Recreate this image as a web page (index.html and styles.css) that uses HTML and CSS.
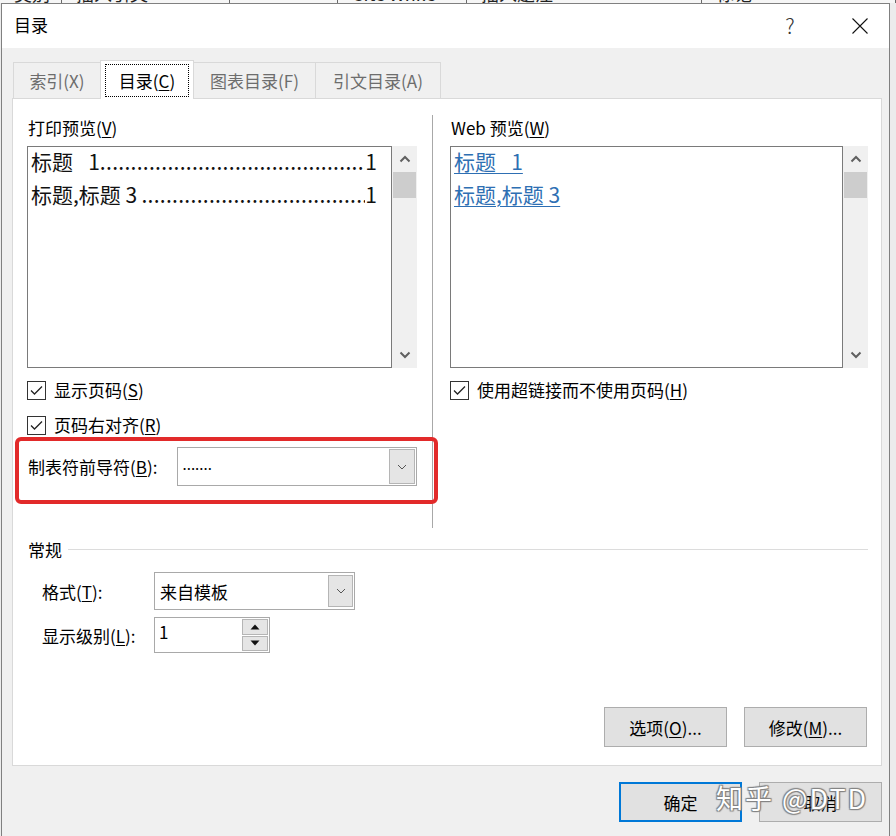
FILE: index.html
```html
<!DOCTYPE html>
<html lang="zh-CN">
<head>
<meta charset="utf-8">
<title>目录</title>
<link rel="stylesheet" href="styles.css">
</head>
<body>
<div class="sheet">
  <div class="cell w1"><span>类别</span></div>
  <div class="cell w2"><span>插入引文</span></div>
  <div class="cell w3"><span></span></div>
  <div class="cell w4"><span>Cite While</span></div>
  <div class="cell w5"><span>插入题注</span></div>
  <div class="cell w6"><span>标记</span></div>
</div>
<div class="dialog">
  <div class="titlebar">
    <span class="title">目录</span>
    <span class="help">?</span>
    <span class="close"><svg width="16" height="16" viewBox="0 0 16 16"><path d="M0.5 0.5L15.5 15.5M15.5 0.5L0.5 15.5" stroke="#111" stroke-width="1.1" fill="none"/></svg></span>
  </div>
  <div class="body">
    <div class="tabs">
      <div class="tab t1">索引(X)</div>
      <div class="tab sel t2"><span class="focus">目录(<u>C</u>)</span></div>
      <div class="tab t3">图表目录(F)</div>
      <div class="tab t4">引文目录(A)</div>
    </div>
    <div class="panel">
      <div class="top">
        <div class="col left">
          <div class="label">打印预览(<u>V</u>)</div>
          <div class="preview">
            <div class="list">
              <div class="entry"><span class="name">标题&ensp; 1</span><span class="leader">..............................................................................</span><span class="num">1</span></div>
              <div class="entry"><span class="name">标题,标题 3&thinsp;</span><span class="leader">..............................................................................</span><span class="num">1</span></div>
            </div>
            <div class="scroll">
              <div class="sb-btn"><svg width="12" height="8" viewBox="0 0 12 8"><polyline points="1.5,6.5 6,2 10.5,6.5" fill="none" stroke="#606060" stroke-width="2"/></svg></div>
              <div class="thumb"></div>
              <div class="sb-fill"></div>
              <div class="sb-btn"><svg width="12" height="8" viewBox="0 0 12 8"><polyline points="1.5,1.5 6,6 10.5,1.5" fill="none" stroke="#606060" stroke-width="2"/></svg></div>
            </div>
          </div>
          <div class="check c1">
            <span class="box"><svg width="17" height="17" viewBox="0 0 17 17"><polyline points="3,8.5 6.5,12 14,4.5" fill="none" stroke="#222" stroke-width="1.3"/></svg></span>
            <span>显示页码(<u>S</u>)</span>
          </div>
          <div class="check c2">
            <span class="box"><svg width="17" height="17" viewBox="0 0 17 17"><polyline points="3,8.5 6.5,12 14,4.5" fill="none" stroke="#222" stroke-width="1.3"/></svg></span>
            <span>页码右对齐(<u>R</u>)</span>
          </div>
          <div class="leader-row">
            <span class="leader-label">制表符前导符(<u>B</u>):</span>
            <div class="combo leader-combo">
              <span class="val dots">.......</span>
              <span class="drop"><svg width="10" height="6" viewBox="0 0 10 6"><polyline points="1,1 5,5 9,1" fill="none" stroke="#555" stroke-width="1"/></svg></span>
            </div>
          </div>
        </div>
        <div class="sep"></div>
        <div class="col right">
          <div class="label">Web 预览(<u>W</u>)</div>
          <div class="preview">
            <div class="list">
              <div class="entry link"><a>标题&ensp; 1</a></div>
              <div class="entry link"><a>标题,标题 3</a></div>
            </div>
            <div class="scroll">
              <div class="sb-btn"><svg width="12" height="8" viewBox="0 0 12 8"><polyline points="1.5,6.5 6,2 10.5,6.5" fill="none" stroke="#606060" stroke-width="2"/></svg></div>
              <div class="thumb"></div>
              <div class="sb-fill"></div>
              <div class="sb-btn"><svg width="12" height="8" viewBox="0 0 12 8"><polyline points="1.5,1.5 6,6 10.5,1.5" fill="none" stroke="#606060" stroke-width="2"/></svg></div>
            </div>
          </div>
          <div class="check c1">
            <span class="box"><svg width="17" height="17" viewBox="0 0 17 17"><polyline points="3,8.5 6.5,12 14,4.5" fill="none" stroke="#222" stroke-width="1.3"/></svg></span>
            <span>使用超链接而不使用页码(<u>H</u>)</span>
          </div>
        </div>
      </div>
      <div class="group-head"><span>常规</span><span class="rule"></span></div>
      <div class="form">
        <div class="form-row r1">
          <span class="flabel">格式(<u>T</u>):</span>
          <div class="combo fmt-combo">
            <span class="val">来自模板</span>
            <span class="drop"><svg width="10" height="6" viewBox="0 0 10 6"><polyline points="1,1 5,5 9,1" fill="none" stroke="#555" stroke-width="1"/></svg></span>
          </div>
        </div>
        <div class="form-row r2">
          <span class="flabel">显示级别(<u>L</u>):</span>
          <div class="spin">
            <span class="val">1</span>
            <span class="spin-btns">
              <span class="sbtn"><svg width="10" height="6" viewBox="0 0 10 6"><polygon points="0.5,5.5 5,0.5 9.5,5.5" fill="#111"/></svg></span>
              <span class="sbtn"><svg width="10" height="6" viewBox="0 0 10 6"><polygon points="0.5,0.5 9.5,0.5 5,5.5" fill="#111"/></svg></span>
            </span>
          </div>
        </div>
      </div>
      <div class="actions">
        <div class="btn">选项(<u>O</u>)...</div>
        <div class="btn">修改(<u>M</u>)...</div>
      </div>
    </div>
    <div class="footer">
      <div class="btn default">确定</div>
      <div class="btn">取消</div>
    </div>
  </div>
  <div class="annot"></div>
  <div class="watermark">知乎 @DTD</div>
</div>
</body>
</html>
```

FILE: styles.css
```css
* { box-sizing: border-box; }
html, body { margin: 0; padding: 0; }
body {
  width: 896px;
  height: 836px;
  overflow: hidden;
  background: #ececec;
  font-family: "Noto Sans CJK SC", "Noto Sans", sans-serif;
  font-size: 17px;
  color: #000;
}
u { text-decoration: underline; text-underline-offset: 2px; }

/* background sheet strip */
.sheet { display: flex; height: 3px; overflow: hidden; background: #f6f6f6; }
.sheet .cell { border-right: 1px solid #6a6a6a; overflow: hidden; white-space: nowrap; padding-left: 14px; color: #222; }
.sheet .cell span { display: block; font-size: 18px; line-height: 18px; margin-top: -16px; }
.w1 { width: 62px; }
.w2 { width: 168px; }
.w3 { width: 108px; }
.w4 { width: 129px; }
.w5 { width: 235px; }
.w6 { width: 194px; border-right: none; }

/* dialog */
.dialog {
  position: relative;
  margin-left: 1px;
  width: 889px;
  height: 840px;
  border: 1px solid #808080;
  background: #f0f0f0;
}
.titlebar { height: 44px; background: #fff; display: flex; align-items: center; padding: 0 0 3px 12px; }
.title { flex: 1; font-size: 17px; }
.help { width: 46px; text-align: center; font-size: 21px; font-weight: 300; color: #333; margin-right: 24px; }
.close { width: 46px; display: flex; justify-content: center; margin-right: 6px; padding-top: 2px; }

.body { padding: 12px 7px 0 10px; }

/* tabs */
.tabs { display: flex; align-items: flex-end; height: 38px; padding-left: 1px; position: relative; z-index: 1; }
.tab {
  height: 36px;
  border: 1px solid #d9d9d9;
  border-bottom: none;
  margin-left: -1px;
  display: flex;
  align-items: center;
  justify-content: center;
  color: #6d6d6d;
  background: #f0f0f0;
  font-size: 17px;
}
.t1 { width: 88px; margin-left: 0; }
.t2 { width: 94px; }
.t3 { width: 123px; }
.t4 { width: 126px; }
.tab.sel { height: 39px; margin-bottom: -1px; background: #fff; color: #000; z-index: 2; position: relative; }
.focus {
  display: flex; align-items: center; justify-content: center;
  width: 84px; height: 33px;
  border: 1px dotted #000;
}

/* panel */
.panel {
  height: 668px;
  background: #fff;
  border: 1px solid #d9d9d9;
  padding: 16px 13px 18px 14px;
  display: flex;
  flex-direction: column;
}
.top { display: flex; height: 413px; }
.col { padding-top: 2px; flex: none; }
.left { width: 390px; }
.right { width: 418px; }
.sep { width: 1px; flex: none; background: #a8a8a8; margin: 0 17px 0 15px; }
.label { height: 24px; line-height: 22px; margin-bottom: 5px; padding-left: 1px; }

.preview { display: flex; height: 222px; }
.list { flex: 1; min-width: 0; border: 1px solid #7a7a7a; padding: 0 14px 0 3px; background: #fff; overflow: hidden; }
.entry { display: flex; font-size: 21px; line-height: 33px; white-space: nowrap; color: #111; }
.entry:first-child { margin-top: -2px; }
.entry .name, .entry .num { flex: none; }
.entry .leader { flex: 1; min-width: 0; overflow: hidden; letter-spacing: 0.3px; }
.entry.link a { color: #2e6fb3; text-decoration: underline; text-underline-offset: 3px; text-decoration-thickness: 1px; }
.scroll { width: 25px; flex: none; background: #f0f0f0; display: flex; flex-direction: column; }
.sb-btn { height: 26px; display: flex; align-items: center; justify-content: center; }
.thumb { height: 26px; background: #cdcdcd; margin: 0 1px; }
.sb-fill { flex: 1; }

.check { display: flex; align-items: center; height: 24px; }
.check > span:last-child { position: relative; top: -1px; }
.c1 { margin-top: 10px; }
.c2 { margin-top: 11px; }
.box { width: 19px; height: 19px; border: 1px solid #333; margin-right: 8px; background: #fff; display: flex; align-items: center; justify-content: center; }

.leader-row { display: flex; align-items: center; height: 39px; margin-top: 10px; }
.leader-label { width: 150px; padding-left: 1px; }
.combo { display: flex; align-items: stretch; border: 1px solid #a9a9a9; background: #fff; }
.combo .val { flex: 1; display: flex; align-items: center; padding-left: 5px; }
.combo .dots { font-size: 15px; padding-bottom: 6px; }
.combo .drop {
  width: 26px;
  margin: 1px;
  border: 1px solid #b5b5b5;
  background: #e5e5e5;
  display: flex; align-items: center; justify-content: center;
}
.leader-combo { width: 241px; height: 39px; }

/* general group */
.group-head { display: flex; align-items: center; height: 24px; margin-top: 9px; padding-left: 1px; }
.rule { flex: 1; height: 1px; background: #dcdcdc; margin-left: 6px; }
.form { padding-left: 15px; }
.form-row { display: flex; align-items: center; }
.r1 { margin-top: 11px; height: 38px; }
.r2 { margin-top: 7px; height: 36px; }
.flabel { width: 112px; }
.fmt-combo { width: 201px; height: 38px; }
.fmt-combo .drop { width: 25px; margin: 2px 1px 2px 1px; }
.spin { width: 116px; height: 36px; border: 1px solid #a9a9a9; background: #fff; display: flex; }
.spin .val { flex: 1; padding-left: 4px; line-height: 28px; }
.spin-btns { width: 26px; margin: 1px 1px 1px 0; display: flex; flex-direction: column; gap: 1px; }
.sbtn { flex: 1; background: #e5e5e5; border: 1px solid #b5b5b5; display: flex; align-items: center; justify-content: center; }

/* buttons */
.actions { margin-top: auto; display: flex; justify-content: flex-end; gap: 17px; margin-right: 1px; }
.btn {
  width: 123px; height: 40px;
  background: #e1e1e1;
  border: 1px solid #adadad;
  display: flex; align-items: center; justify-content: center;
  font-size: 17px;
}
.btn.default { border: 2px solid #0078d7; }
.footer { display: flex; justify-content: flex-end; gap: 17px; margin-top: 16px; }

/* overlays */
.annot {
  position: absolute;
  left: 13px; top: 433px;
  width: 423px; height: 67px;
  border: 4px solid #e22a2a;
  border-radius: 6px;
}
.watermark {
  position: absolute;
  left: 714px; top: 776px;
  font-size: 27px;
  line-height: 36px;
  color: #fff;
  white-space: nowrap;
  letter-spacing: 2px;
  text-shadow: 0 0 1px #666, 1px 1px 1px #888, -1px -1px 1px #888, 1px -1px 1px #888, -1px 1px 1px #888;
}
```
